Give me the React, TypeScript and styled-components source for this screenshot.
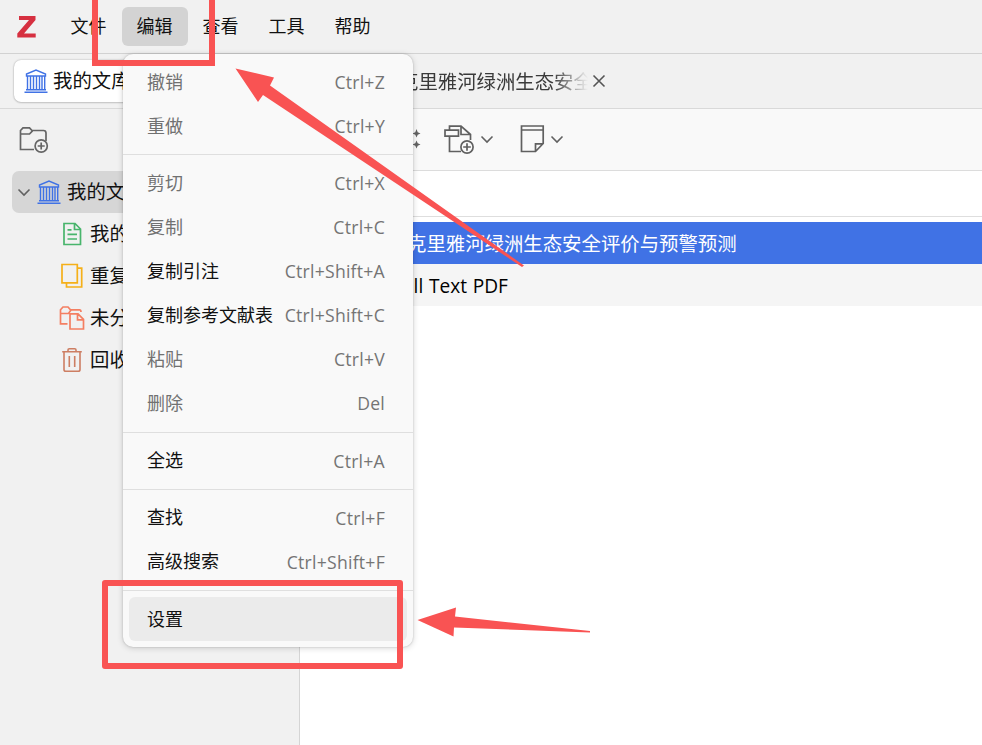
import React from 'react';
import styled, { createGlobalStyle } from 'styled-components';

const GlobalStyle = createGlobalStyle`
  * { box-sizing: border-box; }
  body {
    margin: 0;
    overflow: hidden;
    font-family: "Open Sans", "Noto Sans CJK SC", sans-serif;
    font-weight: 400;
    color: #111;
  }
  svg { display: block; flex: none; }
`;

const Window = styled.div`
  position: relative;
  width: 982px;
  height: 745px;
  display: flex;
  flex-direction: column;
  overflow: hidden;
  background: #fff;
`;

const MenuBar = styled.header`
  flex: none;
  height: 54px;
  display: flex;
  align-items: center;
  padding-left: 17px;
  background: #f1f1f1;
  border-bottom: 1px solid #d2d2d2;
`;

const MenuTitle = styled.button<{ $open?: boolean }>`
  width: 66px;
  height: 39px;
  border: 0;
  padding: 0 1px 0 0;
  border-radius: 6px;
  background: ${p => (p.$open ? '#d3d3d3' : 'transparent')};
  font: inherit;
  font-size: 18px;
  line-height: 39px;
  color: #111;
`;

const MenuTitles = styled.nav`
  display: flex;
  margin-left: 19px;
`;

const TabBar = styled.div`
  flex: none;
  height: 55px;
  display: flex;
  align-items: center;
  background: #f1f1f1;
  border-bottom: 1px solid #d9d9d9;
  padding-left: 14px;
`;

const LibraryTab = styled.div`
  width: 200px;
  height: 42px;
  display: flex;
  align-items: center;
  gap: 5px;
  padding: 0 0 1px 10px;
  border-radius: 7px;
  background: #fff;
  box-shadow: 0 0 2px rgba(0, 0, 0, 0.3), 0 1px 2px rgba(0, 0, 0, 0.12);
  font-size: 19.4px;
`;

const DocumentTab = styled.div`
  display: flex;
  align-items: center;
  margin-left: 185px;
  padding-bottom: 1px;
  color: #3a3a3a;
  font-size: 19.4px;
`;

const TabText = styled.span`
  width: 193px;
  overflow: hidden;
  white-space: nowrap;
  mask-image: linear-gradient(to right, #000 154px, transparent 189px);
`;

const Content = styled.div`
  flex: 1;
  min-height: 0;
  display: flex;
`;

const Sidebar = styled.aside`
  width: 300px;
  flex: none;
  background: #f1f1f1;
  border-right: 1px solid #d5d5d5;
`;

const SidebarTools = styled.div`
  height: 62px;
  padding: 17px 0 0 18px;
`;

const TreeRow = styled.div<{ $root?: boolean }>`
  height: 42px;
  display: flex;
  align-items: center;
  gap: ${p => (p.$root ? '6px' : '5px')};
  margin: 0 12px;
  padding-left: ${p => (p.$root ? '5px' : '47px')};
  border-radius: 7px;
  background: ${p => (p.$root ? '#d6d6d6' : 'transparent')};
  font-size: 19.4px;
  white-space: nowrap;
`;

const TreeLabel = styled.span`
  padding-bottom: 3px;
`;

const Main = styled.main`
  flex: 1;
  min-width: 0;
  background: #fff;
`;

const Toolbar = styled.div`
  height: 62px;
  display: flex;
  align-items: center;
  padding: 0 0 1px 112px;
  background: #f9f9f9;
  border-bottom: 1px solid #dcdcdc;
`;

const ToolButton = styled.div<{ $gap: number }>`
  display: flex;
  align-items: center;
  gap: 5px;
  margin-left: ${p => p.$gap}px;
`;

const ListHeader = styled.div`
  height: 46px;
  margin-bottom: 5px;
  border-bottom: 1px solid #dedede;
`;

const ItemRow = styled.div<{ $selected?: boolean }>`
  height: 42px;
  line-height: 42px;
  padding-top: 1px;
  padding-left: ${p => (p.$selected ? '107px' : '92px')};
  font-size: ${p => (p.$selected ? '19.4px' : '19.1px')};
  word-spacing: 0.8px;
  white-space: nowrap;
  color: ${p => (p.$selected ? '#fff' : '#000')};
  background: ${p => (p.$selected ? '#4072e5' : '#f5f5f5')};
`;

const Popup = styled.div`
  position: absolute;
  left: 123px;
  top: 54px;
  width: 290px;
  padding: 6px 0;
  border-radius: 10px;
  background: #f9f9f9;
  box-shadow: 0 0 2px rgba(0, 0, 0, 0.2), 0 1px 6px rgba(0, 0, 0, 0.17);
`;

const PopupItem = styled.div<{ $disabled?: boolean; $active?: boolean }>`
  height: 44px;
  display: flex;
  align-items: center;
  justify-content: space-between;
  margin: 0 6px;
  padding: 0 22px 0 18px;
  border-radius: 6px;
  background: ${p => (p.$active ? '#ebebeb' : 'transparent')};
  color: ${p => (p.$disabled ? '#717171' : '#111')};
  font-size: 18px;
  line-height: 24px;
  white-space: nowrap;
`;

const ItemLabel = styled.span`
  padding-bottom: 1px;
`;

const Shortcut = styled.span`
  color: #747474;
  font-size: 17.6px;
  letter-spacing: 0.25px;
`;

const Separator = styled.div`
  height: 13.3px;
  padding-top: 6.3px;
  &::before {
    content: '';
    display: block;
    height: 1px;
    background: #dfdfdf;
  }
`;

const Annotations = styled.svg`
  position: absolute;
  inset: 0;
  pointer-events: none;
`;

const ZLogo = () => (
  <svg width="20" height="22" viewBox="0 0 20 22">
    <path d="M2 0H18.5V4L7 17.5H18.7V21.6H.3V17.6L12 4.1H2Z" fill="#d63040" />
  </svg>
);

const LibraryIcon = () => (
  <svg width="24" height="26" viewBox="0 0 24 26" fill="none" stroke="#4072e5" strokeWidth="1.4">
    <path d="M2.5 8V6L12 2 21.5 6V8ZM3.5 8V22M6.5 8V22M9.5 8V22M12.5 8V22M15.5 8V22M18 8V22M20.7 8V22M2 21.8H22M0.5 24.3H23.5" />
  </svg>
);

const Chevron = () => (
  <svg width="14" height="14" viewBox="0 0 14 14" fill="none" stroke="#616161" strokeWidth="1.6">
    <path d="M1.5 4.5 7 10 12.5 4.5" />
  </svg>
);

const CloseIcon = () => (
  <svg width="14" height="14" viewBox="0 0 14 14" fill="none" stroke="#555" strokeWidth="1.6">
    <path d="M1.5 1.5 12.5 12.5M12.5 1.5 1.5 12.5" />
  </svg>
);

const NewCollectionIcon = () => (
  <svg width="32" height="30" viewBox="0 0 32 30" fill="none" stroke="#656565" strokeWidth="1.7">
    <path d="M16 23.5H2.5V4.5L5 1.8H11.5L14 4.5H25.5Q28 4.5 28 7V15M2.5 8H11.5L14.5 4.8" />
    <circle cx="23.2" cy="20" r="6.1" />
    <path d="M23.2 16.5V23.5M19.7 20H26.7" />
  </svg>
);

const DocumentIcon = () => (
  <svg width="26" height="26" viewBox="0 0 26 26" fill="none" stroke="#48b56c" strokeWidth="1.7">
    <path d="M5 2.5H16L21.5 8V23.5H5ZM15.5 2.5V8.5H21.5M8.5 8.8H12.5M8.5 13.3H18M8.5 18H18" />
  </svg>
);

const DuplicateIcon = () => (
  <svg width="26" height="26" viewBox="0 0 26 26" fill="none" stroke="#f5b019" strokeWidth="1.7">
    <path d="M3 1.5H18.3V19.8H3ZM18.3 5.2H22.7V24H7.5V19.8" />
  </svg>
);

const UnfiledIcon = () => (
  <svg width="26" height="26" viewBox="0 0 26 26" fill="none" stroke="#f47f62" strokeWidth="1.7">
    <path d="M8.5 18.8H1.5V4.8L4 2H9L11.5 4.8H20.5Q22 4.8 22 7M1.5 8.5H9.5L12 5M11 8.8H19L24.5 14.3V24H11ZM18.5 8.8V14.8H24.5" />
  </svg>
);

const TrashIcon = () => (
  <svg width="26" height="26" viewBox="0 0 26 26" fill="none" stroke="#cd7e63" strokeWidth="1.6">
    <path d="M5 5.2V22.5Q5 24.3 6.8 24.3H19.2Q21 24.3 21 22.5V5.2M3.2 4.8H22.8M9 4.8V3Q9 1.7 10.3 1.7H15.7Q17 1.7 17 3V4.8M10.3 9V20M15.7 9V20" />
  </svg>
);

const SparkleIcon = () => (
  <svg width="9" height="28" viewBox="0 0 9 28" fill="#626262">
    <path d="M4.5 4 5.7 7.3 8.5 8.5 5.7 9.7 4.5 12.5 3.3 9.7 .5 8.5 3.3 7.3ZM4.5 15.5 5.7 18.3 8.5 19.5 5.7 20.7 4.5 23.5 3.3 20.7 .5 19.5 3.3 18.3Z" />
  </svg>
);

const AddAttachmentIcon = () => (
  <svg width="31" height="30" viewBox="0 0 31 30" fill="none" stroke="#606060" strokeWidth="1.7">
    <path d="M5.5 6V2.2H17L26.5 10.5V16M17 2.2V10.5H26.5M5.5 12.5V27.5H17M1 6.2H14.5V12.2H1Z" />
    <circle cx="23" cy="23" r="6.1" fill="#f9f9f9" />
    <path d="M23 19.2V26.8M19.2 23H26.8" />
  </svg>
);

const NoteIcon = () => (
  <svg width="25" height="30" viewBox="0 0 25 30" fill="none" stroke="#606060" strokeWidth="1.7">
    <path d="M1.5 2H23.2V19.5L15.5 27.5H1.5ZM1.5 6H23.2M15.5 27.5V19.8H23.2" />
  </svg>
);

const documentTitle = '克里雅河绿洲生态安全评价与预警预测';

type Entry = { label: string; keys?: string; disabled?: boolean; active?: boolean };

const editMenu: Entry[][] = [
  [
    { label: '撤销', keys: 'Ctrl+Z', disabled: true },
    { label: '重做', keys: 'Ctrl+Y', disabled: true },
  ],
  [
    { label: '剪切', keys: 'Ctrl+X', disabled: true },
    { label: '复制', keys: 'Ctrl+C', disabled: true },
    { label: '复制引注', keys: 'Ctrl+Shift+A' },
    { label: '复制参考文献表', keys: 'Ctrl+Shift+C' },
    { label: '粘贴', keys: 'Ctrl+V', disabled: true },
    { label: '删除', keys: 'Del', disabled: true },
  ],
  [{ label: '全选', keys: 'Ctrl+A' }],
  [
    { label: '查找', keys: 'Ctrl+F' },
    { label: '高级搜索', keys: 'Ctrl+Shift+F' },
  ],
  [{ label: '设置', active: true }],
];

export default function App() {
  return (
    <Window>
      <GlobalStyle />
      <MenuBar>
        <ZLogo />
        <MenuTitles>
          {['文件', '编辑', '查看', '工具', '帮助'].map(title => (
            <MenuTitle key={title} $open={title === '编辑'}>{title}</MenuTitle>
          ))}
        </MenuTitles>
      </MenuBar>
      <TabBar>
        <LibraryTab><LibraryIcon /><TreeLabel>我的文库</TreeLabel></LibraryTab>
        <DocumentTab>
          <TabText>{documentTitle}</TabText>
          <CloseIcon />
        </DocumentTab>
      </TabBar>
      <Content>
        <Sidebar>
          <SidebarTools><NewCollectionIcon /></SidebarTools>
          <TreeRow $root><Chevron /><LibraryIcon /><TreeLabel>我的文库</TreeLabel></TreeRow>
          <TreeRow><DocumentIcon /><TreeLabel>我的出版物</TreeLabel></TreeRow>
          <TreeRow><DuplicateIcon /><TreeLabel>重复条目</TreeLabel></TreeRow>
          <TreeRow><UnfiledIcon /><TreeLabel>未分类条目</TreeLabel></TreeRow>
          <TreeRow><TrashIcon /><TreeLabel>回收站</TreeLabel></TreeRow>
        </Sidebar>
        <Main>
          <Toolbar>
            <SparkleIcon />
            <ToolButton $gap={23}><AddAttachmentIcon /><Chevron /></ToolButton>
            <ToolButton $gap={26}><NoteIcon /><Chevron /></ToolButton>
          </Toolbar>
          <ListHeader />
          <ItemRow $selected>{documentTitle}</ItemRow>
          <ItemRow>Full Text PDF</ItemRow>
        </Main>
      </Content>
      <Popup>
        {editMenu.map((group, index) => (
          <React.Fragment key={index}>
            {index > 0 && <Separator />}
            {group.map(entry => (
              <PopupItem key={entry.label} $disabled={entry.disabled} $active={entry.active}>
                <ItemLabel>{entry.label}</ItemLabel>
                {entry.keys && <Shortcut>{entry.keys}</Shortcut>}
              </PopupItem>
            ))}
          </React.Fragment>
        ))}
      </Popup>
      <Annotations width="982" height="745" viewBox="0 0 982 745">
        <g fill="none" stroke="#f95353" strokeWidth="6" strokeLinejoin="round">
          <path d="M95 -6V63H212V-6" strokeLinejoin="miter" />
          <rect x="105" y="583" width="295" height="83" />
        </g>
        <g fill="#f95353">
          <path d="M235.5 68.5 274 77.5 270 85.5 524 265.5 522 267 263 95 258 102Z" />
          <path d="M417.5 620 456 607.5 455 616.5 590 631 590 632.5 454 627.5 453.5 636.5Z" />
        </g>
      </Annotations>
    </Window>
  );
}
